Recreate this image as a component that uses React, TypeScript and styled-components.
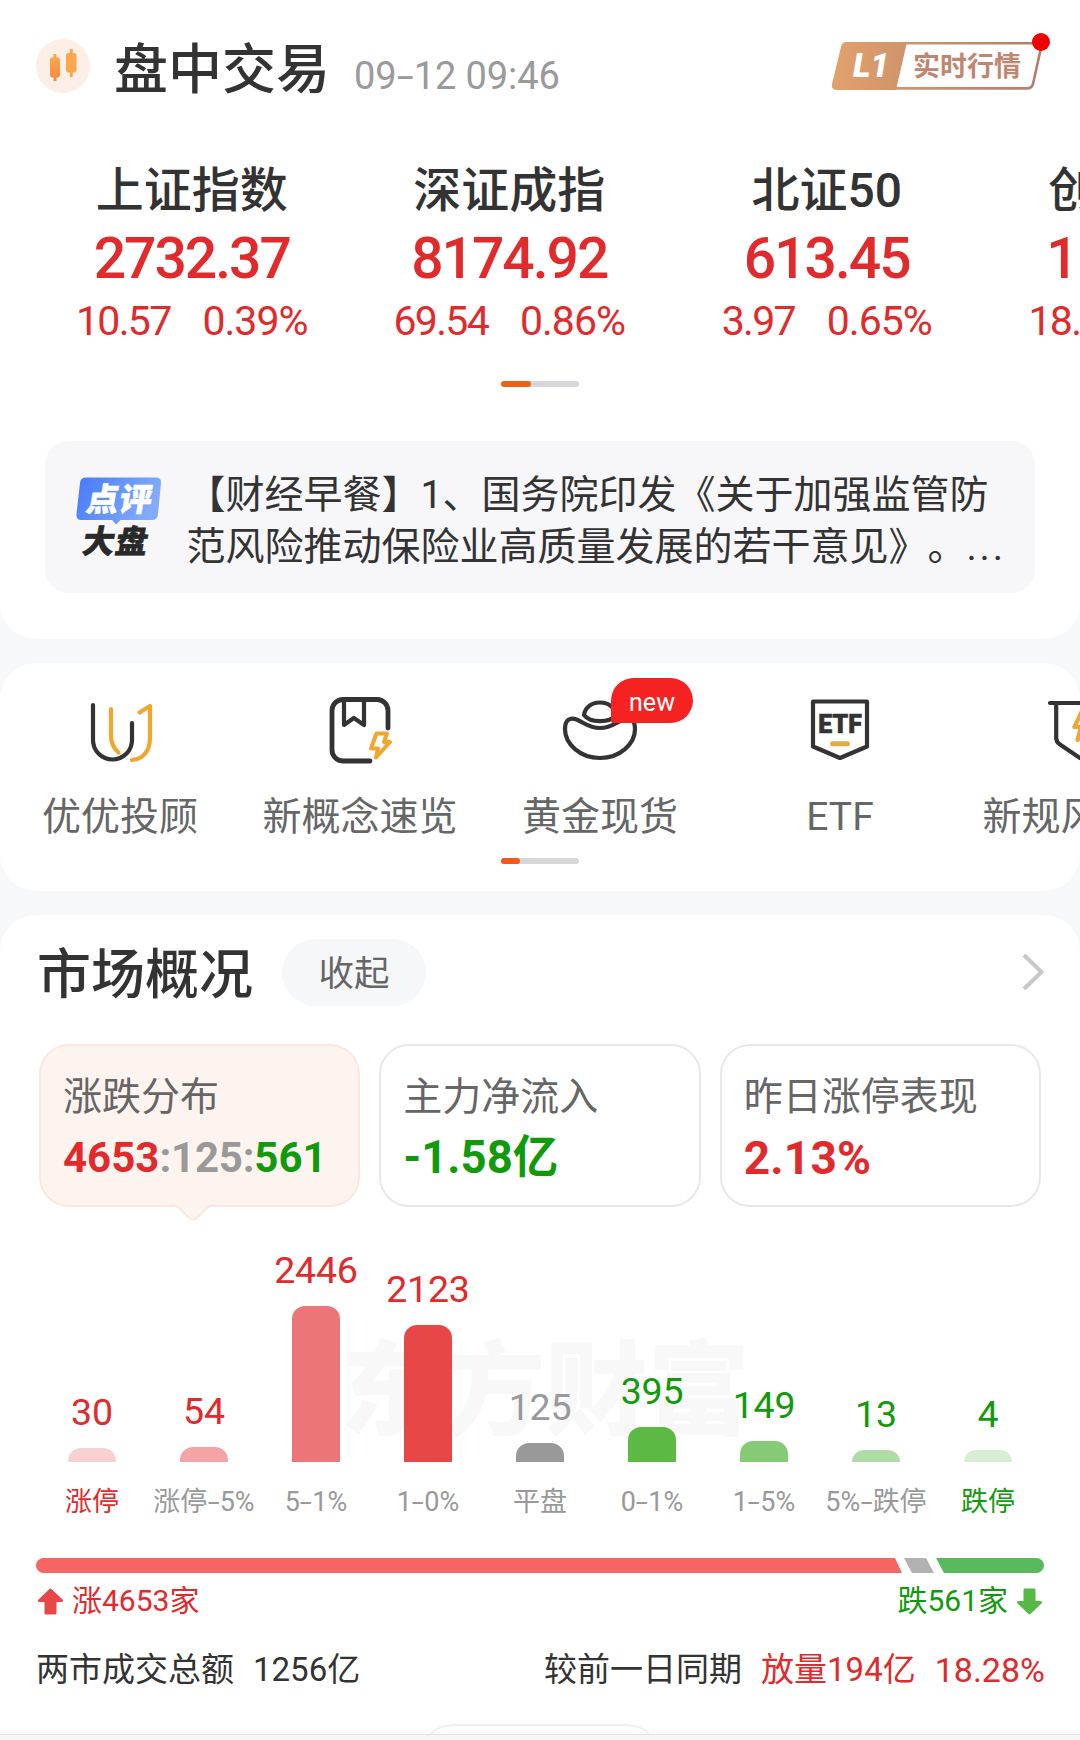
import React from 'react';
import styled, { createGlobalStyle } from 'styled-components';

const RED = '#e02a2c';
const GREEN = '#109a0c';
const INK = '#333333';
const ORANGE = '#f2a62c';

const Global = createGlobalStyle`
  html, body { margin: 0; padding: 0; background: #f6f8fa; }
  * { box-sizing: border-box; }
  body {
    font-family: Roboto, "Noto Sans CJK SC", sans-serif;
    color: ${INK};
    text-spacing-trim: space-all;
  }
`;

const Screen = styled.main`
  width: 1080px;
  height: 1740px;
  overflow: hidden;
  display: flex;
  flex-direction: column;
  gap: 24px;
  background: #f6f8fa;
`;

const Panel = styled.section<{ $h: number; $radius: string }>`
  flex: none;
  height: ${p => p.$h}px;
  border-radius: ${p => p.$radius};
  background: #fff;
  overflow: hidden;
  display: flex;
  flex-direction: column;

  > * { flex-shrink: 0; }
`;

const Txt = styled.span<{ $s: number; $w?: number; $c?: string; $ls?: number; $lh?: number }>`
  display: block;
  white-space: pre;
  font-size: ${p => p.$s}px;
  font-weight: ${p => p.$w ?? 400};
  color: ${p => p.$c ?? INK};
  letter-spacing: ${p => p.$ls ?? 0}px;
  line-height: ${p => (p.$lh ? p.$lh + 'px' : 'inherit')};
`;

const WideDash = styled.span`
  display: inline-block;
  margin: 0 0.09em;
  transform: scaleX(1.6);
`;

const Dots = styled.span`
  letter-spacing: 2.8px;
`;

const Header = styled.header`
  height: 160px;
  padding: 34px 30px 0 36px;
  display: flex;
  align-items: flex-start;
`;

const HeaderIcon = styled.svg`
  margin-top: 5px;
  flex: none;
`;

const HeaderTitle = styled.h1`
  margin: 3px 0 0 24px;
  font-size: 54px;
  font-weight: 500;
  line-height: 68px;
`;

const HeaderTime = styled.time`
  margin: 9px 0 0 24px;
  font-size: 38px;
  line-height: 66px;
  color: #9a9a9a;
  letter-spacing: -0.1px;
  white-space: pre;
`;

const QuoteBadge = styled.svg`
  margin: -4px 0 0 auto;
  flex: none;
`;

const IndexStrip = styled.div`
  display: flex;
  padding-left: 33px;
`;

const IndexItem = styled.div`
  flex: 0 0 317.5px;
  display: flex;
  flex-direction: column;
  align-items: center;
`;

const IndexDelta = styled.div`
  display: flex;
  gap: 32px;
  margin-top: 4px;
`;

const Pager = styled.div<{ $top: number }>`
  align-self: center;
  flex: none;
  width: 78px;
  height: 6px;
  margin-top: ${p => p.$top}px;
  border-radius: 3px;
  background: #d6d7da;
`;

const PagerThumb = styled.div<{ $w: number; $c: string }>`
  width: ${p => p.$w}px;
  height: 6px;
  border-radius: 3px;
  background: ${p => p.$c};
`;

const News = styled.article`
  width: 990px;
  height: 152px;
  margin: 54px 0 0 45px;
  padding: 28px 0 0 31px;
  border-radius: 24px;
  background: #f7f7f9;
  display: flex;
`;

const NewsTag = styled.svg`
  margin-top: 8px;
  flex: none;
`;

const NewsBody = styled.div`
  margin-left: 24.5px;
`;

const NavRow = styled.nav`
  display: flex;
  padding-top: 27px;
`;

const NavItem = styled.a`
  flex: 0 0 240px;
  display: flex;
  flex-direction: column;
  align-items: center;
`;

const NavIcon = styled.div`
  position: relative;
  width: 80px;
  height: 80px;
`;

const NewBadge = styled.span`
  position: absolute;
  left: 51px;
  top: -12px;
  width: 82px;
  height: 45px;
  border-radius: 23px 23px 23px 2px;
  background: #f52222;
  color: #fff;
  font-size: 25px;
  line-height: 49px;
  text-align: center;
`;

const OverviewHead = styled.div`
  display: flex;
  align-items: center;
  height: 68px;
  margin-top: 23px;
  padding: 0 35px 0 37px;
`;

const OverviewTitle = styled.h2`
  margin: 7px 0 0;
  font-size: 54px;
  font-weight: 500;
  line-height: 68px;
`;

const Fold = styled.button`
  margin: 0 0 0 29px;
  width: 144px;
  height: 67px;
  border: 0;
  border-radius: 34px;
  background: #f6f7f9;
  color: #666;
  font: 400 35.5px/66px Roboto, "Noto Sans CJK SC", sans-serif;
  padding: 2px 0 0;
`;

const Chevron = styled.svg`
  margin: -1px 0 0 auto;
`;

const StatRow = styled.div`
  display: flex;
  gap: 19px;
  padding: 0 39px;
  margin-top: 38px;
`;

const StatCard = styled.div<{ $active?: boolean }>`
  position: relative;
  flex: 1;
  height: 163px;
  padding: 23px 0 0 22px;
  border: 2px solid ${p => (p.$active ? '#fae8de' : '#e8e8e8')};
  border-radius: 30px;
  background: ${p => (p.$active ? '#fef4ef' : '#fff')};
`;

const Pointer = styled.svg`
  position: absolute;
  left: 130px;
  bottom: -17px;
`;

const StatValue = styled.div`
  display: flex;
  height: 60px;
  margin-top: 3px;
  align-items: center;
`;

const Chart = styled.div`
  position: relative;
  height: 300px;
  margin-top: 16px;
  padding: 0 36px;
  display: flex;
`;

const Watermark = styled.div`
  position: absolute;
  left: 340px;
  top: 99px;
  font-size: 102.5px;
  font-weight: 900;
  line-height: 140px;
  color: #f8f8f8;
  white-space: nowrap;
`;

const BarColumn = styled.div`
  position: relative;
  flex: 0 0 112px;
  display: flex;
  flex-direction: column;
  align-items: center;
  justify-content: flex-end;
`;

const Bar = styled.div<{ $c: string }>`
  width: 48px;
  margin: 10px 0 20px;
  border-radius: 13px 13px 0 0;
  background: ${p => p.$c};
`;

const Ratio = styled.svg`
  display: block;
  flex: none;
  margin: 35px 0 0 36px;
`;

const Legend = styled.div`
  display: flex;
  align-items: center;
  height: 40px;
  margin-top: 8px;
  padding: 0 37px;
`;

const Spacer = styled.div`
  flex: 1;
`;

const Totals = styled.div`
  display: flex;
  height: 46px;
  margin-top: 26px;
  padding: 0 35px 0 36px;
  align-items: center;
  gap: 19px;
`;

const Footer = styled.div`
  height: 17px;
  margin-top: 31px;
  display: flex;
  flex-direction: column;
`;

const Handle = styled.div`
  align-self: center;
  width: 218px;
  height: 10px;
  border: 2px solid #eeeeee;
  border-bottom: 0;
  border-radius: 40px 40px 0 0 / 14px 14px 0 0;
`;

const FooterLine = styled.div`
  height: 7px;
  border-top: 1px solid #e2e2e2;
  background: #f7f7f7;
`;

const indices = [
  { name: '上证指数', value: '2732.37', diff: '10.57', pct: '0.39%' },
  { name: '深证成指', value: '8174.92', diff: '69.54', pct: '0.86%' },
  { name: '北证50', value: '613.45', diff: '3.97', pct: '0.65%' },
  { name: '创业板指', value: '1548.84', diff: '18.08', pct: '1.18%' },
];

const bars = [
  { n: '30', label: '涨停', h: 14, c: '#f9d0d2', t: RED, lc: RED },
  { n: '54', label: '涨停-5%', h: 15, c: '#f2a4a7', t: RED, lc: '#999' },
  { n: '2446', label: '5-1%', h: 156, c: '#ec7577', t: RED, lc: '#999' },
  { n: '2123', label: '1-0%', h: 137, c: '#e84747', t: RED, lc: '#999' },
  { n: '125', label: '平盘', h: 19, c: '#999999', t: '#999', lc: '#999' },
  { n: '395', label: '0-1%', h: 35, c: '#5cb944', t: GREEN, lc: '#999' },
  { n: '149', label: '1-5%', h: 21, c: '#85cb76', t: GREEN, lc: '#999' },
  { n: '13', label: '5%-跌停', h: 12, c: '#afdca5', t: GREEN, lc: '#999' },
  { n: '4', label: '跌停', h: 12, c: '#d6eed2', t: GREEN, lc: GREEN },
];

const Dashed = ({ text }: { text: string }) => (
  <>
    {text.split('-').map((part, i) => (
      <React.Fragment key={i}>
        {i > 0 && <WideDash>-</WideDash>}
        {part}
      </React.Fragment>
    ))}
  </>
);

const line = { fill: 'none', strokeWidth: 4.2, strokeLinecap: 'round', strokeLinejoin: 'round' } as const;

const AdvisorIcon = () => (
  <svg width="80" height="80" {...line}>
    <path stroke={ORANGE} d="M31 19V46Q31 56 38.500 62.500M59.500 22.500L70 16V49Q69 68 52 70" />
    <path stroke={INK} d="M13 15V50a19.500 19.500 0 0 0 39 0V33" />
  </svg>
);

const ConceptIcon = () => (
  <svg width="80" height="80" {...line}>
    <path stroke={INK} strokeWidth="4.800" d="M68 38V20.500a11 11 0 0 0-11-11H23a11 11 0 0 0-11 11V60a11 11 0 0 0 11 11H50" />
    <path stroke={INK} d="M24 9.500V35L33.800 28L44 35V9.500" />
    <path stroke={ORANGE} strokeWidth="4" d="M56.500 43.500H67L64 52H70L56 67.500L58 58.500H51Z" />
  </svg>
);

const GoldIcon = () => (
  <svg width="80" height="80" {...line}>
    <path stroke={INK} d="M40 12.500C31 12.500 25 18 24 25C27 29 33 31.200 40 31.200S53 29 56 25C55 18 49 12.500 40 12.500Z" />
    <path stroke={INK} d="M40 68C20 68 5 54 5 39C5 30 10 27 16.500 29.500C24 32.500 29 38 40 38S56 32.500 63.500 29.500C70 27 75 30 75 39C75 54 60 68 40 68Z" />
  </svg>
);

const EtfIcon = () => (
  <svg width="80" height="80" {...line}>
    <path stroke={INK} d="M13 11.500H67V56.500L40 68L13 56.500Z" />
    <path stroke="#e5ab45" strokeWidth="5" d="M32.500 53.700H47.500" />
    <text x="40" y="43" textAnchor="middle" textLength="43.500" lengthAdjust="spacingAndGlyphs" fill={INK} stroke={INK} strokeWidth="0.600" fontSize="25.500" fontWeight="900">ETF</text>
  </svg>
);

const RuleIcon = () => (
  <svg width="80" height="80" {...line}>
    <path stroke={INK} d="M10 13H70M16.200 13V48Q16.200 52 20 54.500L40 68L60 54.500Q64 52 64 48V13" />
    <path stroke={ORANGE} fill="#fff" d="M42 21L34.500 37H41L37.500 50L50 33H43L47 21Z" />
  </svg>
);

const navItems = [
  { label: '优优投顾', icon: <AdvisorIcon /> },
  { label: '新概念速览', icon: <ConceptIcon /> },
  { label: '黄金现货', icon: <GoldIcon />, badge: 'new' },
  { label: 'ETF', icon: <EtfIcon /> },
  { label: '新规风向标', icon: <RuleIcon /> },
];

const Arrow = ({ down }: { down?: boolean }) => (
  <svg width="27" height="27" viewBox="0 0 27 27">
    <path
      transform={down ? 'rotate(180 13.500 13.500)' : undefined}
      fill={down ? '#55b944' : '#e84747'}
      d="M12.300 1.200Q13.500 0 14.700 1.200L25.500 11.500Q27 14 24.500 14H19.500V25Q19.500 26.500 18 26.500H9Q7.500 26.500 7.500 25V14H2.500Q0 14 1.500 11.500Z"
    />
  </svg>
);

export default function App() {
  return (
    <>
      <Global />
      <Screen>
        <Panel $h={639} $radius="0 0 36px 36px">
          <Header>
            <HeaderIcon width="54" height="54">
              <defs>
                <linearGradient id="candle" x1="0" y1="0" x2="0" y2="1">
                  <stop offset="0" stopColor="#f8ab4c" />
                  <stop offset="1" stopColor="#fa8742" />
                </linearGradient>
              </defs>
              <circle cx="27" cy="27" r="27" fill="#fdeee6" />
              <path fill="url(#candle)" d="M17.500 15h3v3.500H22.500L24 20V37L22.500 38.500H20.500V42h-3V38.500H15.500L14 37V20L15.500 18.500H17.500Z" />
              <path fill="#f9a84d" d="M33.800 10h3v4H39L40.500 15.500V32L39 33.500H36.800V38h-3V33.500H31.500L30 32V15.500L31.500 14H33.800Z" />
            </HeaderIcon>
            <HeaderTitle>盘中交易</HeaderTitle>
            <HeaderTime><Dashed text="09-12 09:46" /></HeaderTime>
            <QuoteBadge width="219" height="66">
              <defs>
                <linearGradient id="bronze" gradientUnits="userSpaceOnUse" x1="0" y1="30" x2="212" y2="40">
                  <stop offset="0" stopColor="#e2a26c" />
                  <stop offset="0.350" stopColor="#d0946c" />
                  <stop offset="1" stopColor="#b47b6c" />
                </linearGradient>
              </defs>
              <path fill="url(#bronze)" d="M15 12H76L65 60H6Q0 60 1 54L10 17Q11 12 15 12Z" />
              <path fill="none" stroke="url(#bronze)" strokeWidth="2.600" d="M14 13.300H211L202 54Q200.500 58.400 196 58.400H7" />
              <text x="22" y="47" fill="#fff" fontSize="33" fontWeight="900" fontStyle="italic" textLength="36" lengthAdjust="spacingAndGlyphs">L1</text>
              <text x="82" y="45.500" fill="#c08670" fontSize="27" fontWeight="700">实时行情</text>
              <circle cx="210" cy="12" r="9" fill="#f00000" />
            </QuoteBadge>
          </Header>
          <IndexStrip>
            {indices.map(i => (
              <IndexItem key={i.name}>
                <Txt $s={48} $w={500} $lh={62}>{i.name}</Txt>
                <Txt $s={57} $w={500} $c={RED} $lh={74} $ls={-2}>{i.value}</Txt>
                <IndexDelta>
                  <Txt $s={41} $c={RED} $lh={42} $ls={-1.7}>{i.diff}</Txt>
                  <Txt $s={41} $c={RED} $lh={42} $ls={-1}>{i.pct}</Txt>
                </IndexDelta>
              </IndexItem>
            ))}
          </IndexStrip>
          <Pager $top={39}><PagerThumb $w={30} $c="#ec6317" /></Pager>
          <News>
            <NewsTag width="86" height="84">
              <defs>
                <linearGradient id="tag" x1="0" y1="0" x2="1" y2="0.300">
                  <stop offset="0" stopColor="#4779f6" />
                  <stop offset="1" stopColor="#82acfb" />
                </linearGradient>
              </defs>
              <path fill="url(#tag)" d="M10 0.500H80Q85.500 0.500 85 6L82 37Q81.500 43 76 43H44.500L40 47.500L36 43H5Q0 43 0.500 37L4 6Q4.500 0.500 10 0.500Z" />
              <g fontFamily="'Noto Sans CJK SC', sans-serif" fontWeight="900" fontSize="32">
                <text transform="translate(9 33.500) skewX(-10)" fill="#fff" stroke="#fff" strokeWidth="0.600" textLength="65">点评</text>
                <text transform="translate(5 76) skewX(-10)" fill="#292929" stroke="#292929" strokeWidth="0.600" textLength="65">大盘</text>
              </g>
            </NewsTag>
            <NewsBody>
              <Txt $s={39} $lh={52}>【财经早餐】1、国务院印发《关于加强监管防</Txt>
              <Txt $s={39} $lh={52}>范风险推动保险业高质量发展的若干意见》。<Dots>...</Dots></Txt>
            </NewsBody>
          </News>
        </Panel>

        <Panel $h={228} $radius="36px">
          <NavRow>
            {navItems.map(n => (
              <NavItem key={n.label}>
                <NavIcon>
                  {n.icon}
                  {n.badge && <NewBadge>{n.badge}</NewBadge>}
                </NavIcon>
                <Txt $s={39} $c="#666" $lh={95}>{n.label}</Txt>
              </NavItem>
            ))}
          </NavRow>
          <Pager $top={-7}><PagerThumb $w={19} $c="#f05a1a" /></Pager>
        </Panel>

        <Panel $h={826} $radius="36px 36px 0 0">
          <OverviewHead>
            <OverviewTitle>市场概况</OverviewTitle>
            <Fold>收起</Fold>
            <Chevron width="23" height="40" fill="none" stroke="#c8c8c8" strokeWidth="4">
              <path d="M2 3L19.500 20L2 37" />
            </Chevron>
          </OverviewHead>
          <StatRow>
            <StatCard $active>
              <Txt $s={39} $c="#666" $lh={56}>涨跌分布</Txt>
              <StatValue>
                <Txt $s={42} $w={700} $c={RED} $lh={60}>4653</Txt>
                <Txt $s={42} $w={700} $c="#999" $lh={60} $ls={-0.2}>:125:</Txt>
                <Txt $s={42} $w={700} $c={GREEN} $lh={60}>561</Txt>
              </StatValue>
              <Pointer width="44" height="19">
                <path fill="#fef4ef" stroke="#fae8de" strokeWidth="2" d="M-2 2H1Q5 2 8 5L17 14Q22 19 27 14L36 5Q39 2 43 2H46V-4H-2Z" />
                <path fill="#fef4ef" d="M0 0H44V1H0Z" />
              </Pointer>
            </StatCard>
            <StatCard>
              <Txt $s={39} $c="#666" $lh={56}>主力净流入</Txt>
              <StatValue><Txt $s={45.5} $w={700} $c={GREEN} $lh={60}>-1.58亿</Txt></StatValue>
            </StatCard>
            <StatCard>
              <Txt $s={39} $c="#666" $lh={56}>昨日涨停表现</Txt>
              <StatValue><Txt $s={46} $w={700} $c={RED} $lh={60} $ls={0.2}>2.13%</Txt></StatValue>
            </StatCard>
          </StatRow>
          <Chart>
            <Watermark>东方财富</Watermark>
            {bars.map(b => (
              <BarColumn key={b.label}>
                <Txt $s={37.5} $c={b.t} $lh={52} $ls={-0.2}>{b.n}</Txt>
                <Bar $c={b.c} style={{ height: b.h }} />
                <Txt $s={27} $c={b.lc} $lh={41}><Dashed text={b.label} /></Txt>
              </BarColumn>
            ))}
          </Chart>
          <Ratio width="1008" height="15">
            <path fill="#f66464" d="M7.500 0H859L866 15H7.500A7.500 7.500 0 0 1 7.500 0Z" />
            <path fill="#b2b2b2" d="M868 0H890L898 15H876Z" />
            <path fill="#58ba5c" d="M900 0H1000.500A7.500 7.500 0 0 1 1000.500 15H908Z" />
          </Ratio>
          <Legend>
            <Arrow />
            <Txt $s={30} $c={RED} $lh={40} style={{ marginLeft: 8 }}>涨4653家</Txt>
            <Spacer />
            <Txt $s={30} $c={GREEN} $lh={40} style={{ marginRight: 8 }}>跌561家</Txt>
            <Arrow down />
          </Legend>
          <Totals>
            <Txt $s={33} $lh={46}>两市成交总额</Txt>
            <Txt $s={33} $lh={46}>1256亿</Txt>
            <Spacer />
            <Txt $s={33} $lh={46}>较前一日同期</Txt>
            <Txt $s={33} $c={RED} $lh={46}>放量194亿</Txt>
            <Txt $s={34} $c={RED} $lh={46}>18.28%</Txt>
          </Totals>
          <Footer>
            <Handle />
            <FooterLine />
          </Footer>
        </Panel>
      </Screen>
    </>
  );
}
